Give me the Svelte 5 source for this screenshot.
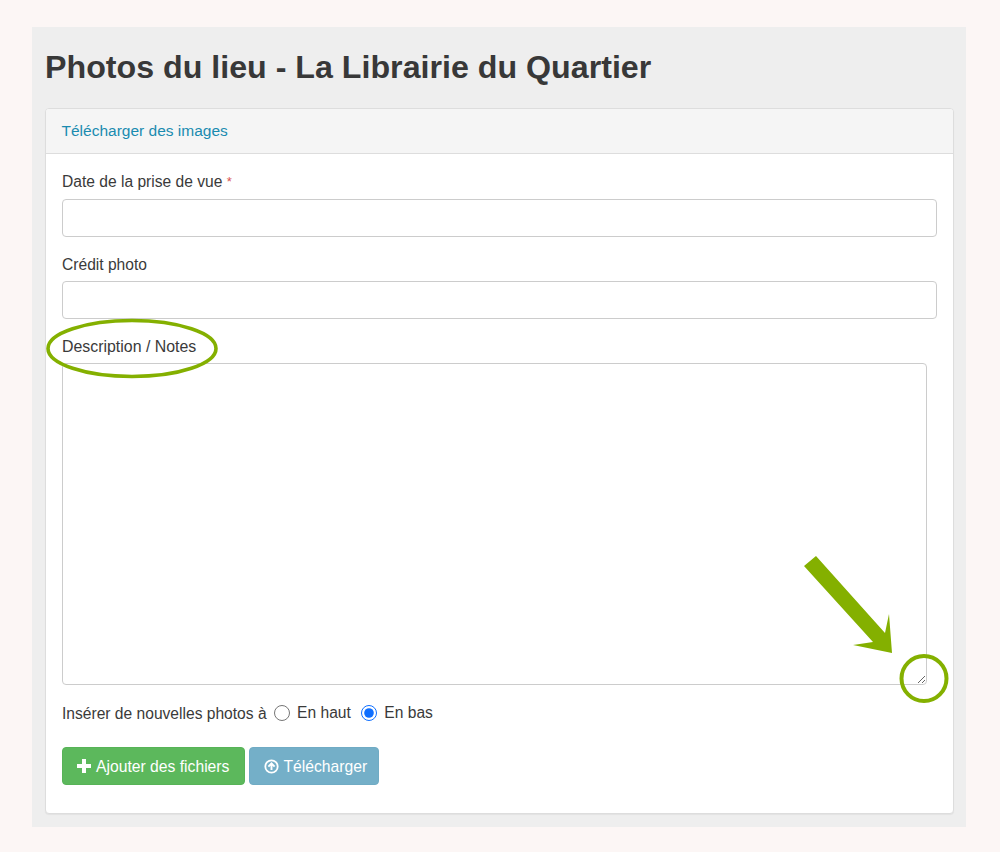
<script>
  let position = $state("bas");
</script>

<div class="page">
  <main class="wrap">
    <h1>Photos du lieu - La Librairie du Quartier</h1>

    <section class="panel">
      <header class="panel-head">Télécharger des images</header>

      <form class="panel-body">
        <label class="field">
          <span class="label">Date de la prise de vue <em>*</em></span>
          <input type="text" />
        </label>

        <label class="field credit">
          <span class="label">Crédit photo</span>
          <input type="text" />
        </label>

        <label class="field notes">
          <span class="label">Description / Notes</span>
          <textarea></textarea>
        </label>

        <div class="insert">
          <span>Insérer de nouvelles photos à</span>
          <label class="radio">
            <input type="radio" name="position" value="haut" bind:group={position} />
            En haut
          </label>
          <label class="radio">
            <input type="radio" name="position" value="bas" bind:group={position} />
            En bas
          </label>
        </div>

        <div class="actions">
          <button class="btn add" type="button">
            <svg width="14" height="14" viewBox="0 0 14 14" fill="currentColor">
              <path d="M5 0h4v5h5v4H9v5H5V9H0V5h5z" />
            </svg>
            Ajouter des fichiers
          </button>
          <button class="btn upload" type="button">
            <svg width="15" height="15" viewBox="0 0 15 15" fill="none" stroke="currentColor">
              <circle cx="7.5" cy="7.5" r="6.2" stroke-width="1.8" />
              <path d="M4.4 7.6 7.5 4.4l3.1 3.2M7.5 5v6" stroke-width="1.9" />
            </svg>
            Télécharger
          </button>
        </div>
      </form>
    </section>
  </main>

  <svg class="marks" width="1000" height="852" viewBox="0 0 1000 852" aria-hidden="true">
    <ellipse cx="132" cy="348.5" rx="84" ry="28" fill="none" stroke="#84b000" stroke-width="3.6" />
    <polygon points="804,566 816,556 885,633 889,614 892,653 853,645 873,642" fill="#84b000" />
    <circle cx="924" cy="678.5" r="22.5" fill="none" stroke="#84b000" stroke-width="4" />
  </svg>
</div>

<style>
  :global(body) {
    margin: 0;
    background: #fcf6f5;
    font-family: "Liberation Sans", Arial, sans-serif;
    color: #3a3a3a;
  }

  .page {
    position: relative;
    height: 852px;
    padding: 27px 34px 25px 32px;
    box-sizing: border-box;
  }

  .wrap {
    height: 800px;
    box-sizing: border-box;
    padding: 0 12px 13px 13px;
    background: #eee;
    display: flex;
    flex-direction: column;
  }

  h1 {
    margin: 0;
    height: 81px;
    line-height: 80px;
    font-size: 32.2px;
    font-weight: 700;
    color: #383838;
  }

  .panel {
    flex: 1;
    background: #fff;
    border: 1px solid #ddd;
    border-radius: 4px;
    box-shadow: 0 1px 1px rgba(0, 0, 0, 0.05);
  }

  .panel-head {
    height: 44px;
    line-height: 44px;
    padding: 0 16px 0 15.5px;
    background: #f5f5f5;
    border-bottom: 1px solid #ddd;
    border-radius: 3px 3px 0 0;
    font-size: 15.5px;
    color: #1a8bb0;
  }

  .panel-body {
    display: flex;
    flex-direction: column;
    padding: 17px 16px 0;
    font-size: 15.6px;
  }

  .field {
    display: flex;
    flex-direction: column;
    margin-bottom: 17px;
  }

  .label {
    height: 21px;
    line-height: 21px;
    margin-bottom: 7px;
  }

  .credit .label {
    margin-bottom: 6px;
  }

  .label em {
    color: #d9534f;
    font-style: normal;
    font-size: 13px;
    vertical-align: 1px;
  }

  input[type="text"],
  textarea {
    box-sizing: border-box;
    border: 1px solid #ccc;
    border-radius: 4px;
    background: #fff;
    outline: none;
    padding: 6px 12px;
    font: inherit;
  }

  input[type="text"] {
    height: 38px;
  }

  textarea {
    width: 865px;
    height: 322px;
    resize: both;
    display: block;
  }

  .notes {
    margin-bottom: 0;
  }

  .notes .label {
    margin-bottom: 6px;
    font-size: 15.9px;
  }

  .insert {
    display: flex;
    align-items: center;
    gap: 7px;
    margin-top: 18px;
    height: 21px;
  }

  .radio {
    display: flex;
    align-items: center;
    gap: 7.5px;
    margin-right: 3px;
    position: relative;
    top: -1px;
  }

  .radio input {
    margin: 0;
    width: 16px;
    height: 16px;
    accent-color: #0f6fff;
  }

  .actions {
    display: flex;
    gap: 4px;
    margin-top: 23px;
  }

  .btn {
    display: flex;
    align-items: center;
    gap: 5px;
    height: 38px;
    box-sizing: border-box;
    padding: 2px 15px 0 14px;
    border: 1px solid transparent;
    border-radius: 4px;
    color: #fff;
    font: inherit;
    font-size: 15.7px;
  }

  .btn svg {
    margin-top: -2px;
  }

  .add {
    background: #5cb85c;
    border-color: #57b357;
  }

  .upload {
    gap: 4px;
    padding-right: 11px;
    background: #74afc8;
    border-color: #70abc4;
  }

  .marks {
    position: absolute;
    top: 0;
    left: 0;
    pointer-events: none;
  }
</style>
